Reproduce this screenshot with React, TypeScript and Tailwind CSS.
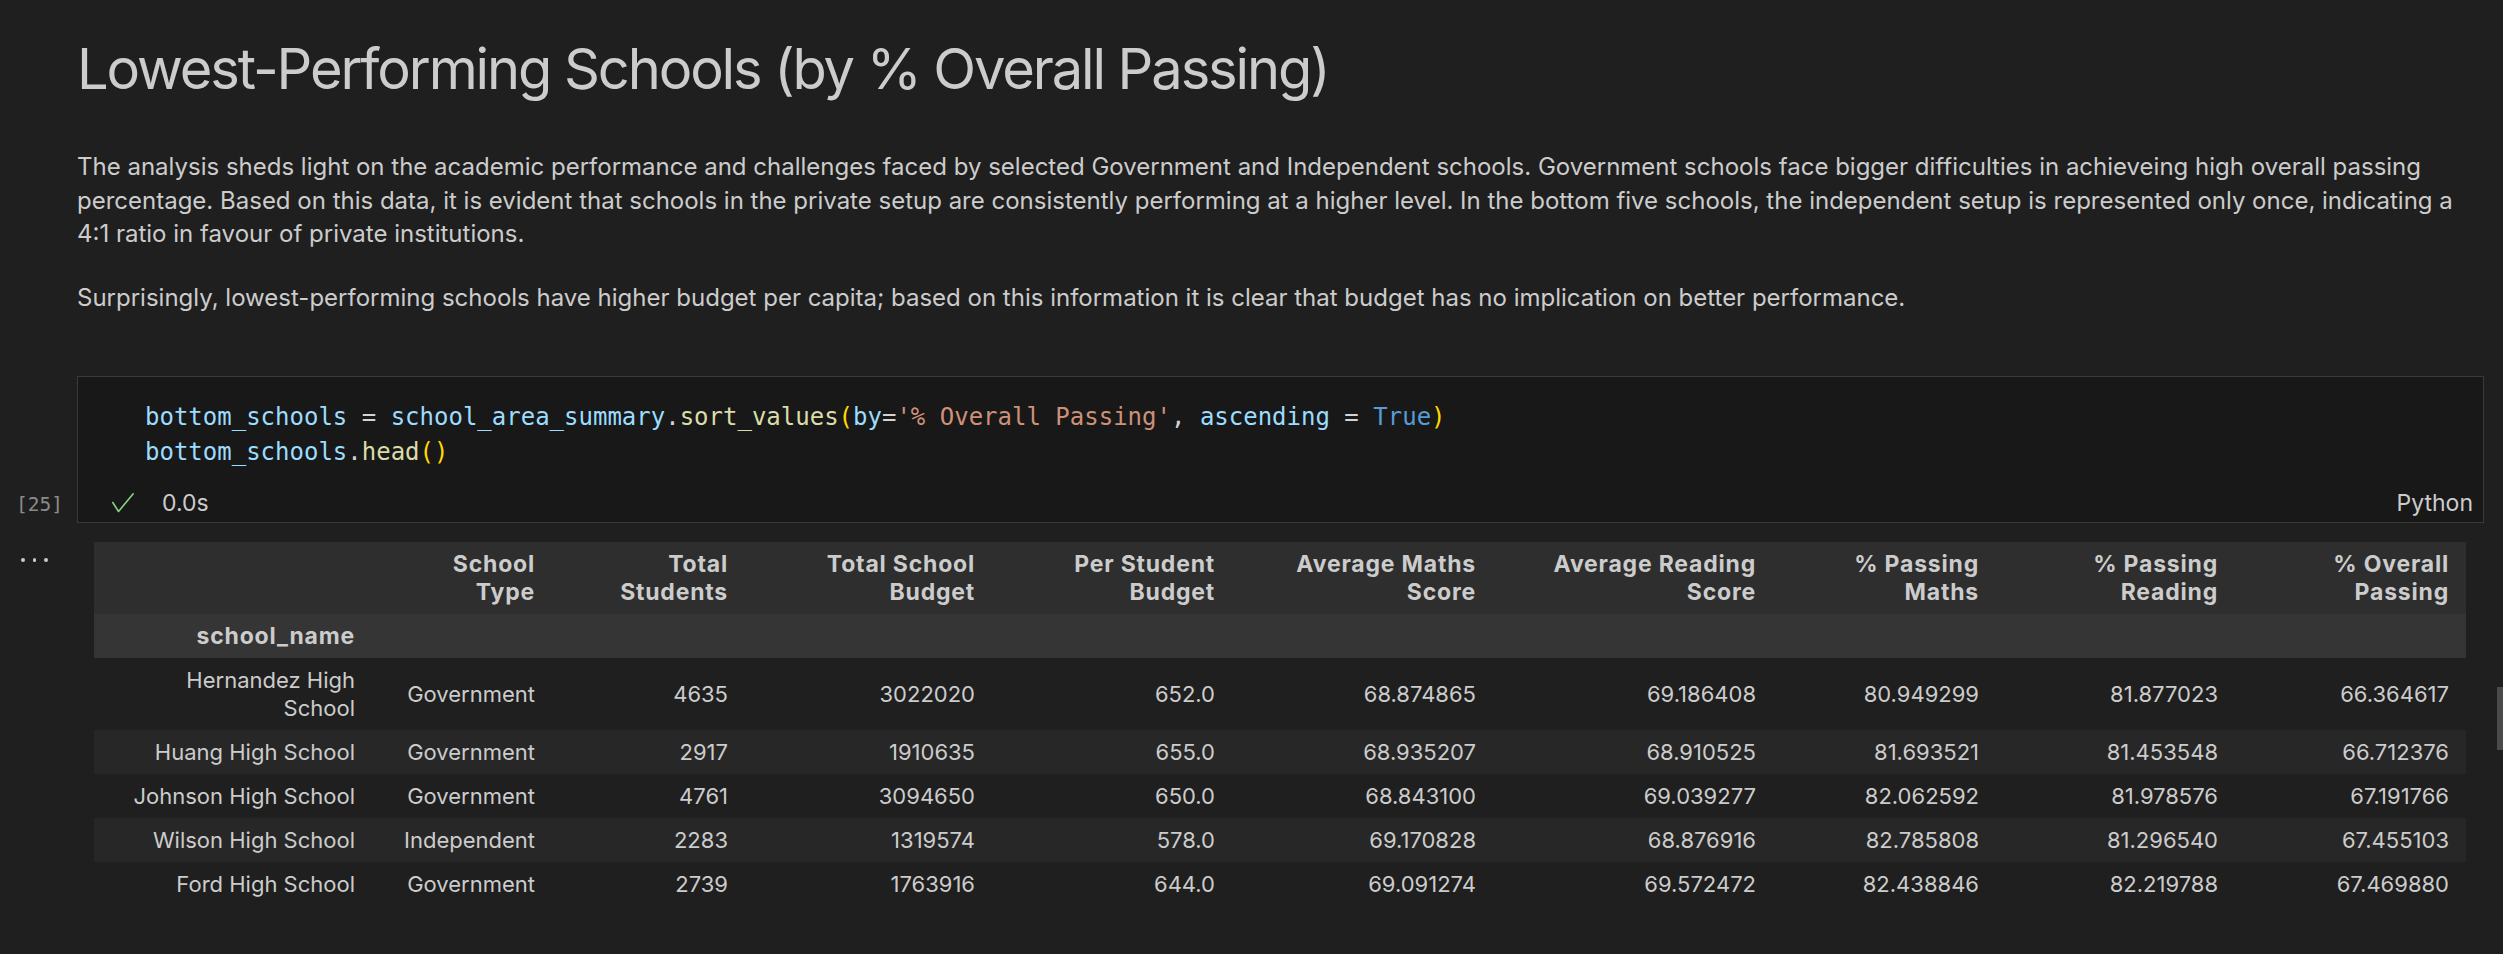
import React from "react";

const headers: string[][] = [
  ["School", "Type"],
  ["Total", "Students"],
  ["Total School", "Budget"],
  ["Per Student", "Budget"],
  ["Average Maths", "Score"],
  ["Average Reading", "Score"],
  ["% Passing", "Maths"],
  ["% Passing", "Reading"],
  ["% Overall", "Passing"],
];

const rows: string[][] = [
  ["Government", "4635", "3022020", "652.0", "68.874865", "69.186408", "80.949299", "81.877023", "66.364617"],
  ["Government", "2917", "1910635", "655.0", "68.935207", "68.910525", "81.693521", "81.453548", "66.712376"],
  ["Government", "4761", "3094650", "650.0", "68.843100", "69.039277", "82.062592", "81.978576", "67.191766"],
  ["Independent", "2283", "1319574", "578.0", "69.170828", "68.876916", "82.785808", "81.296540", "67.455103"],
  ["Government", "2739", "1763916", "644.0", "69.091274", "69.572472", "82.438846", "82.219788", "67.469880"],
];

const names: React.ReactNode[] = [
  <>Hernandez High<br />School</>,
  "Huang High School",
  "Johnson High School",
  "Wilson High School",
  "Ford High School",
];

const colWidths = [
  "w-[278px]",
  "w-[180px]",
  "w-[193px]",
  "w-[247px]",
  "w-[240px]",
  "w-[261px]",
  "w-[280px]",
  "w-[223px]",
  "w-[239px]",
  "w-[231px]",
];

export default function App() {
  return (
    <div className="relative w-[2503px] h-[954px] overflow-hidden bg-[#1f1f1f] text-[#cccccc] font-['Inter','Noto_Sans',sans-serif]">
      {/* Markdown cell */}
      <div className="pl-[77px] pt-[35px]">
        <h1 className="text-[56px] leading-[68px] font-normal tracking-[-2.1px] text-[#cccccc]">
          Lowest-Performing Schools (by % Overall Passing)
        </h1>
        <p className="mt-[47px] text-[24px] leading-[33.5px] whitespace-nowrap">
          The analysis sheds light on the academic performance and challenges faced by selected Government and Independent schools. Government schools face bigger difficulties in achieveing high overall passing
          <br />
          percentage. Based on this data, it is evident that schools in the private setup are consistently performing at a higher level. In the bottom five schools, the independent setup is represented only once, indicating a
          <br />
          4:1 ratio in favour of private institutions.
        </p>
        <p className="mt-[30px] text-[24px] leading-[33.5px] whitespace-nowrap">
          Surprisingly, lowest-performing schools have higher budget per capita; based on this information it is clear that budget has no implication on better performance.
        </p>
      </div>

      {/* Code cell */}
      <div className="mt-[62px] flex">
        <div className="w-[77px] flex flex-col justify-end items-end pr-[14px] pb-[4px]">
          <span className="font-['DejaVu_Sans_Mono',monospace] text-[19.5px] leading-[28px] text-[#8b8b8b]">[25]</span>
        </div>
        <div className="w-[2407px] border border-[#393939] bg-[#181818] pt-[23px] pb-[5px]">
          <div className="pl-[67px] font-['DejaVu_Sans_Mono',monospace] text-[24px] leading-[35px] whitespace-pre text-[#d4d4d4]">
            <div>
              <span className="text-[#9cdcfe]">bottom_schools</span>
              {" = "}
              <span className="text-[#9cdcfe]">school_area_summary</span>
              .
              <span className="text-[#dcdcaa]">sort_values</span>
              <span className="text-[#ffd700]">(</span>
              <span className="text-[#9cdcfe]">by</span>
              =
              <span className="text-[#ce9178]">'% Overall Passing'</span>
              {", "}
              <span className="text-[#9cdcfe]">ascending</span>
              {" = "}
              <span className="text-[#569cd6]">True</span>
              <span className="text-[#ffd700]">)</span>
            </div>
            <div>
              <span className="text-[#9cdcfe]">bottom_schools</span>
              .
              <span className="text-[#dcdcaa]">head</span>
              <span className="text-[#ffd700]">()</span>
            </div>
          </div>
          <div className="mt-[19px] h-[28px] flex items-center pl-[34px] pr-[10px]">
            <svg width="22" height="20" viewBox="0 0 22 20" fill="none" className="shrink-0">
              <polyline points="0.8,9.5 6.5,18.5 21.2,0.8" stroke="#89d185" strokeWidth="1.6" strokeLinejoin="round" strokeLinecap="round" />
            </svg>
            <span className="ml-[28px] text-[23px] leading-[28px] text-[#cccccc]">0.0s</span>
            <span className="ml-auto text-[23px] leading-[28px] text-[#cccccc]">Python</span>
          </div>
        </div>
      </div>

      {/* Output */}
      <div className="mt-[19px] flex">
        <div className="w-[94px] shrink-0 flex gap-[8px] pl-[21px] pt-[16px]">
          <span className="w-[3.5px] h-[3.5px] rounded-full bg-[#cccccc]" />
          <span className="w-[3.5px] h-[3.5px] rounded-full bg-[#cccccc]" />
          <span className="w-[3.5px] h-[3.5px] rounded-full bg-[#cccccc]" />
        </div>
        <table className="table-fixed w-[2372px] text-[22px] leading-[28px] text-[#cccccc]">
          <colgroup>
            {colWidths.map((w, i) => (
              <col key={i} className={w} />
            ))}
          </colgroup>
          <thead>
            <tr className="bg-[#2e2e2e]">
              <th className="py-[8px]" />
              {headers.map((h, i) => (
                <th key={i} className="py-[8px] pr-[17px] text-right font-bold text-[23px] tracking-[0.8px] whitespace-nowrap">
                  {h[0]}
                  <br />
                  {h[1]}
                </th>
              ))}
            </tr>
            <tr className="bg-[#353535]">
              <th className="py-[8px] pr-[17px] text-right font-bold text-[23px] tracking-[0.8px]">school_name</th>
              {headers.map((_, i) => (
                <th key={i} className="py-[8px]" />
              ))}
            </tr>
          </thead>
          <tbody>
            {rows.map((r, ri) => (
              <tr key={ri} className={ri % 2 === 1 ? "bg-[#272727]" : "bg-[#1f1f1f]"}>
                <th className="py-[8px] pr-[17px] text-right font-normal whitespace-nowrap">{names[ri]}</th>
                {r.map((c, ci) => (
                  <td key={ci} className="py-[8px] pr-[17px] text-right whitespace-nowrap">
                    {c}
                  </td>
                ))}
              </tr>
            ))}
          </tbody>
        </table>
      </div>

      {/* Scrollbar slider */}
      <div className="absolute right-0 top-[687px] w-[6px] h-[63px] bg-[#4a4a4a]" />
    </div>
  );
}
